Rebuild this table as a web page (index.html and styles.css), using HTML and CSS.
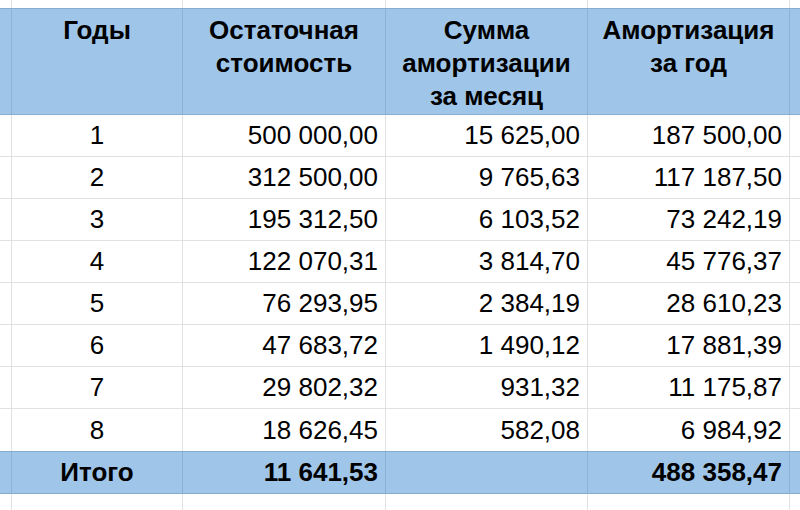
FILE: index.html
```html
<!DOCTYPE html>
<html lang="ru">
<head>
<meta charset="utf-8">
<title>Амортизация</title>
<link rel="stylesheet" href="styles.css">
</head>
<body>
<div class="sheet">
  <div class="row top">
    <div class="c c0"></div><div class="c c1"></div><div class="c c2"></div><div class="c c3"></div><div class="c c4"></div><div class="c c5"></div>
  </div>
  <div class="row head">
    <div class="c c0"></div>
    <div class="c c1">Годы</div>
    <div class="c c2">Остаточная<br>стоимость</div>
    <div class="c c3">Сумма<br>амортизации<br>за месяц</div>
    <div class="c c4">Амортизация<br>за год</div>
    <div class="c c5"></div>
  </div>
  <div class="row data"><div class="c c0"></div><div class="c c1">1</div><div class="c c2">500 000,00</div><div class="c c3">15 625,00</div><div class="c c4">187 500,00</div><div class="c c5"></div></div>
  <div class="row data"><div class="c c0"></div><div class="c c1">2</div><div class="c c2">312 500,00</div><div class="c c3">9 765,63</div><div class="c c4">117 187,50</div><div class="c c5"></div></div>
  <div class="row data"><div class="c c0"></div><div class="c c1">3</div><div class="c c2">195 312,50</div><div class="c c3">6 103,52</div><div class="c c4">73 242,19</div><div class="c c5"></div></div>
  <div class="row data"><div class="c c0"></div><div class="c c1">4</div><div class="c c2">122 070,31</div><div class="c c3">3 814,70</div><div class="c c4">45 776,37</div><div class="c c5"></div></div>
  <div class="row data"><div class="c c0"></div><div class="c c1">5</div><div class="c c2">76 293,95</div><div class="c c3">2 384,19</div><div class="c c4">28 610,23</div><div class="c c5"></div></div>
  <div class="row data"><div class="c c0"></div><div class="c c1">6</div><div class="c c2">47 683,72</div><div class="c c3">1 490,12</div><div class="c c4">17 881,39</div><div class="c c5"></div></div>
  <div class="row data"><div class="c c0"></div><div class="c c1">7</div><div class="c c2">29 802,32</div><div class="c c3">931,32</div><div class="c c4">11 175,87</div><div class="c c5"></div></div>
  <div class="row data last"><div class="c c0"></div><div class="c c1">8</div><div class="c c2">18 626,45</div><div class="c c3">582,08</div><div class="c c4">6 984,92</div><div class="c c5"></div></div>
  <div class="row total"><div class="c c0"></div><div class="c c1">Итого</div><div class="c c2">11 641,53</div><div class="c c3"></div><div class="c c4">488 358,47</div><div class="c c5"></div></div>
  <div class="row bottom">
    <div class="c c0"></div><div class="c c1"></div><div class="c c2"></div><div class="c c3"></div><div class="c c4"></div><div class="c c5"></div>
  </div>
</div>
</body>
</html>
```
FILE: styles.css
```css
html, body {
  margin: 0;
  padding: 0;
  background: #ffffff;
}
body {
  width: 800px;
  height: 510px;
  overflow: hidden;
  font-family: "Liberation Sans", Arial, sans-serif;
  color: #000;
}
.sheet {
  width: 800px;
  display: flex;
  flex-direction: column;
}
.row {
  display: flex;
  box-sizing: border-box;
}
.c {
  box-sizing: border-box;
  flex: none;
  white-space: nowrap;
  border-left: 1px solid #e1e1e1;
}
.c0 { width: 11px; border-left: none; }
.c1 { width: 171px; }
.c2 { width: 203px; }
.c3 { width: 202px; }
.c4 { width: 202px; }
.c5 { flex: 1; }

.top { height: 8px; }
.bottom { height: 40px; }

.head {
  height: 107px;
  background: #9fc5e8;
  border-top: 1px solid #86acd0;
  border-bottom: 1px solid #86acd0;
}
.head .c {
  border-left-color: #8cb2d6;
  font-weight: bold;
  font-size: 26px;
  line-height: 33px;
  text-align: center;
  padding-top: 5px;
}
.head .c0 { border-left: none; }

.data {
  height: 42px;
  border-bottom: 1px solid #e1e1e1;
  font-size: 26px;
}
.data.last { border-bottom: none; }
.data .c, .total .c {
  display: flex;
  align-items: center;
  justify-content: flex-end;
  padding-right: 7px;
}
.data .c1, .total .c1 {
  justify-content: center;
  padding-right: 0;
}

.total {
  height: 43px;
  background: #9fc5e8;
  border-top: 1px solid #86acd0;
  border-bottom: 1px solid #86acd0;
  font-weight: bold;
  font-size: 26px;
}
.total .c { border-left-color: #8cb2d6; }
.total .c0, .data .c0 { border-left: none; }
```
